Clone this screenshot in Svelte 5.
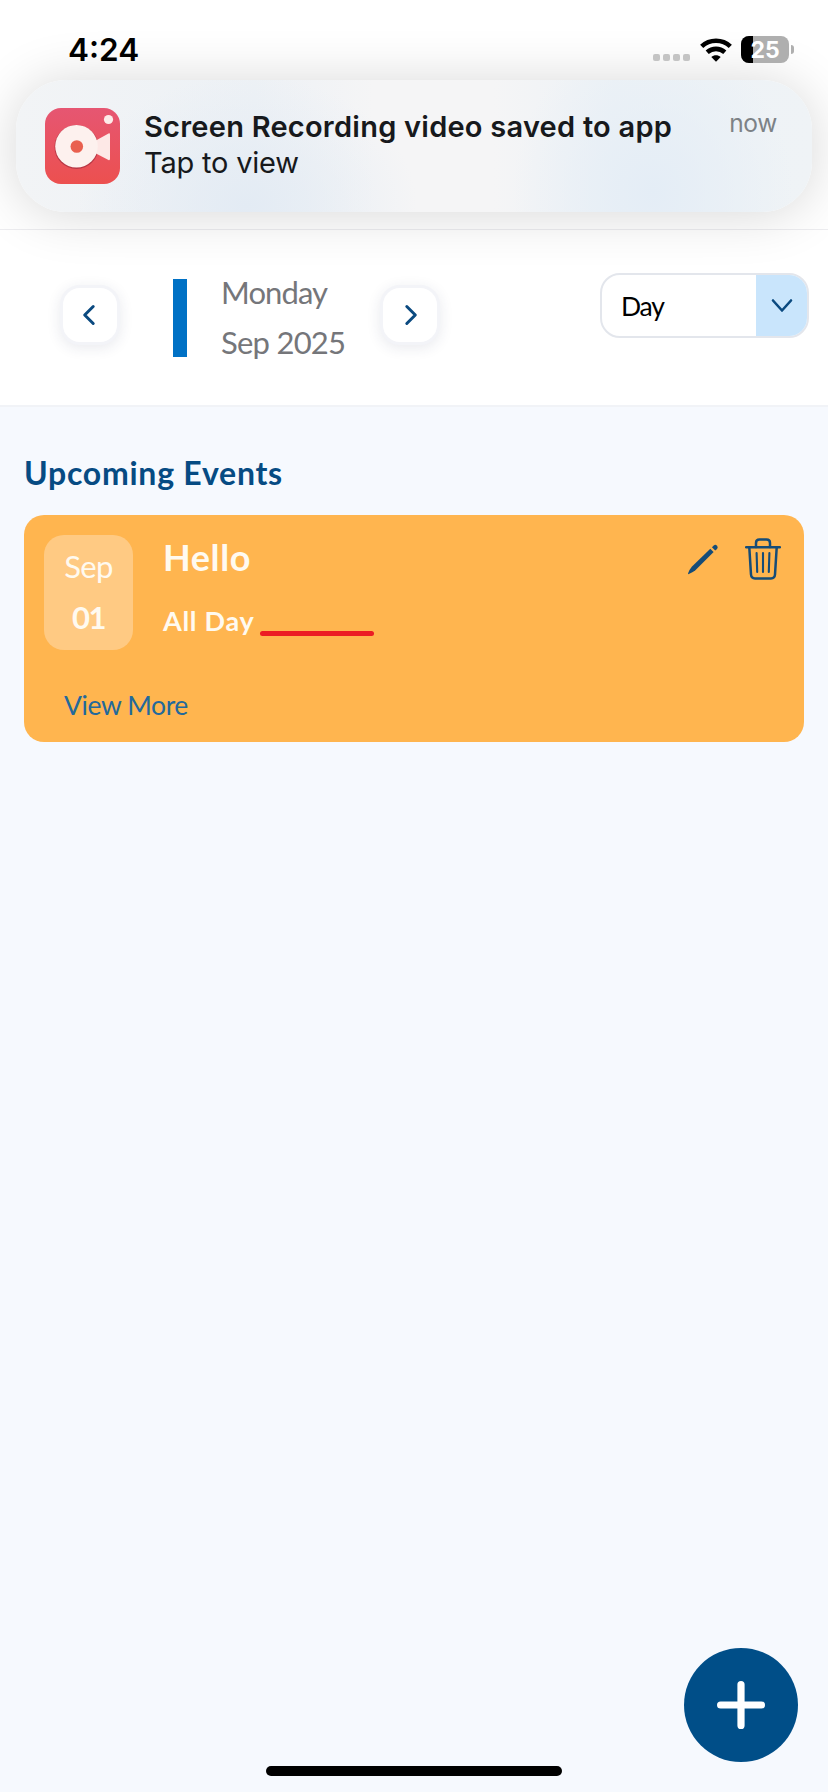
<script lang="ts">
	type CalendarEvent = {
		month: string;
		day: string;
		title: string;
		time: string;
	};

	let view = $state('Day');
	let weekday = $state('Monday');
	let monthLabel = $state('Sep 2025');

	const battery = 25;
	const signalDots = [0, 1, 2, 3];
	const events: CalendarEvent[] = [{ month: 'Sep', day: '01', title: 'Hello', time: 'All Day' }];
</script>

<div class="screen">
	<div class="top">
		<div class="status-bar">
			<span class="clock">4:24</span>
			<div class="status-icons">
				<div class="signal">
					{#each signalDots as dot (dot)}
						<span></span>
					{/each}
				</div>
				<svg class="wifi" width="32" height="24" viewBox="0 0 32 24" aria-hidden="true">
					<g fill="none" stroke="#000" stroke-width="4.6">
						<path d="M1.7 8.4C9.6 .9 22.4 .9 30.3 8.4" />
						<path d="M7.2 14.3C12.3 9.7 19.7 9.7 24.8 14.3" />
					</g>
					<path d="M11.3 18.9C14 16.7 18 16.7 20.7 18.9L16 23.8Z" />
				</svg>
				<div class="battery">
					<div class="battery-fill" style="width: {battery}%"></div>
					<span class="battery-text">{battery}</span>
				</div>
				<span class="battery-nub"></span>
			</div>
		</div>

		<div class="banner">
			<svg class="app-icon" width="75" height="76" viewBox="0 0 75 76" aria-hidden="true">
				<defs>
					<linearGradient id="app-bg" x1="0" y1="0" x2="0" y2="1">
						<stop offset="0" stop-color="#e65672" />
						<stop offset="1" stop-color="#ec504f" />
					</linearGradient>
				</defs>
				<rect width="75" height="76" rx="16" fill="url(#app-bg)" />
				<circle cx="31.5" cy="39" r="22" fill="#b93845" />
				<path d="M50 33L63.5 25.5Q65 24.8 65 26.5V50.5Q65 52.7 63.5 52L50 45Z" fill="#fde8e6" />
				<circle cx="31.5" cy="38.3" r="21.3" fill="#fdf1ee" />
				<circle cx="31.8" cy="38.5" r="6.3" fill="#e9604f" />
				<circle cx="63.5" cy="11.5" r="4.6" fill="#fdebe9" />
			</svg>
			<div class="banner-text">
				<span class="banner-title">Screen Recording video saved to app</span>
				<span class="banner-body">Tap to view</span>
			</div>
			<span class="banner-time">now</span>
		</div>
	</div>

	<div class="date-header">
		<button type="button" class="nav-button" aria-label="Previous day">
			<svg width="16" height="22" viewBox="0 0 16 22">
				<path d="M11.2 2.5L2.7 11L11.2 19.5" />
			</svg>
		</button>
		<div class="accent"></div>
		<div class="date-text">
			<span class="weekday">{weekday}</span>
			<span class="month">{monthLabel}</span>
		</div>
		<button type="button" class="nav-button" aria-label="Next day">
			<svg width="16" height="22" viewBox="0 0 16 22">
				<path d="M4.8 2.5L13.3 11L4.8 19.5" />
			</svg>
		</button>
		<button type="button" class="view-select">
			<span class="view-label">{view}</span>
			<span class="view-arrow">
				<svg width="22" height="16" viewBox="0 0 22 16">
					<path d="M2 2.5L11 12.5L20 2.5" />
				</svg>
			</span>
		</button>
	</div>

	<main>
		<h2>Upcoming Events</h2>
		{#each events as event (event.title)}
			<article class="event-card">
				<div class="event-main">
					<div class="date-chip">
						<span class="chip-month">{event.month}</span>
						<span class="chip-day">{event.day}</span>
					</div>
					<div class="event-info">
						<h3>{event.title}</h3>
						<div class="event-time">
							<span class="time-label">{event.time}</span>
							<span class="underline"></span>
						</div>
					</div>
					<div class="event-actions">
						<button type="button" aria-label="Edit event">
							<svg width="32" height="32" viewBox="0 0 32 32" fill="#154c78">
								<path d="M23.3 5.7L26.6 9L8.4 27.2Q5.2 29.7 1.8 31.1Q.8 31.3 1.1 30.2Q2.5 26.5 5 23.6Z" />
								<path d="M24.9 4.2L26.8 2.4Q28.4 1.2 30 2.7Q31.4 4.3 30.1 5.9L28.2 7.5Z" />
							</svg>
						</button>
						<button type="button" aria-label="Delete event">
							<svg
								width="36"
								height="42"
								viewBox="0 0 36 42"
								fill="none"
								stroke="#154c78"
								stroke-width="2.5"
								stroke-linecap="round"
								stroke-linejoin="round"
							>
								<path d="M1.2 9.2H34.8" />
								<path d="M11 9V5Q11 1.6 14.5 1.6H21.5Q25 1.6 25 5V9" />
								<path d="M4.3 9.5L6 36.5Q6.3 40.4 10 40.4H26Q29.7 40.4 30 36.5L31.7 9.5" />
								<path d="M11.6 15L12.2 34M18 15V34M24.4 15L23.8 34" stroke-width="2.1" />
							</svg>
						</button>
					</div>
				</div>
				<button type="button" class="view-more">View More</button>
			</article>
		{/each}
	</main>

	<button type="button" class="fab" aria-label="Add event">
		<svg width="48" height="48" viewBox="0 0 48 48">
			<path d="M24 3.6V44.4M3.6 24H44.4" />
		</svg>
	</button>
	<div class="home-indicator"></div>
</div>

<style>
	:global(body) {
		margin: 0;
		background: #f6f9fe;
	}

	.screen {
		position: relative;
		width: 828px;
		height: 1792px;
		overflow: hidden;
		background: #f6f9fe;
		font-family: Lato, 'Open Sans', sans-serif;
	}

	button {
		display: flex;
		align-items: center;
		justify-content: center;
		box-sizing: border-box;
		border: none;
		background: transparent;
		padding: 0;
		margin: 0;
		font-family: inherit;
		cursor: pointer;
	}

	svg {
		display: block;
	}

	.top {
		box-sizing: border-box;
		height: 230px;
		background: #fff;
		border-bottom: 1px solid #ededf0;
		font-family: Inter, 'Liberation Sans', sans-serif;
	}

	.status-bar {
		position: relative;
		z-index: 2;
		display: flex;
		align-items: flex-start;
		justify-content: space-between;
		box-sizing: border-box;
		height: 80px;
		padding: 29px 34px 0 68px;
	}

	.clock {
		font-size: 31.5px;
		line-height: 41px;
		font-weight: 600;
		color: #000;
	}

	.status-icons {
		display: flex;
		align-items: center;
		height: 41px;
	}

	.signal {
		display: flex;
		gap: 3px;
		margin: 16px 10px 0 0;
	}

	.signal span {
		width: 7px;
		height: 7px;
		border-radius: 2px;
		background: #c4c4c4;
	}

	.wifi {
		margin-right: 9px;
	}

	.battery {
		position: relative;
		width: 48px;
		height: 27px;
		border-radius: 8px;
		overflow: hidden;
		background: #afafaf;
	}

	.battery-fill {
		height: 100%;
		background: #000;
	}

	.battery-text {
		position: absolute;
		inset: 0;
		font-size: 23px;
		line-height: 28px;
		font-weight: 700;
		text-align: center;
		color: #fff;
	}

	.battery-nub {
		width: 3px;
		height: 9px;
		margin-left: 2px;
		border-radius: 0 4px 4px 0;
		background: #afafaf;
	}

	.banner {
		position: relative;
		z-index: 1;
		display: flex;
		align-items: flex-start;
		box-sizing: border-box;
		height: 132px;
		margin: 0 16px;
		padding: 28px 35px 0 29px;
		border-radius: 50px;
		background:
			radial-gradient(ellipse 170px 130px at 29% 95%, #e3ebf4 0%, rgba(227, 235, 244, 0) 100%),
			radial-gradient(ellipse 140px 160px at 80% 85%, #e4edf6 0%, rgba(228, 237, 246, 0) 100%),
			linear-gradient(90deg, #f2f4f6 0%, #edf1f5 30%, #f5f5f6 45%, #f5f5f6 60%, #edf2f6 75%, #eff3f6 100%);
		box-shadow: 0 2px 54px rgba(0, 0, 0, 0.16);
	}

	.app-icon {
		flex-shrink: 0;
	}

	.banner-text {
		display: flex;
		flex-direction: column;
		flex: 1;
		margin: 1px 0 0 24px;
		font-size: 29px;
		line-height: 36px;
		color: #17191c;
		white-space: nowrap;
	}

	.banner-title {
		font-weight: 600;
		letter-spacing: 0.24px;
	}

	.banner-body {
		letter-spacing: -0.2px;
	}

	.banner-time {
		font-size: 24.5px;
		line-height: 30px;
		letter-spacing: -0.3px;
		color: #7d8286;
	}

	.date-header {
		display: flex;
		align-items: flex-start;
		box-sizing: border-box;
		height: 177px;
		padding: 43px 19px 0 60px;
		background: #fff;
		border-bottom: 2px solid #f1f3f7;
	}

	.nav-button {
		width: 60px;
		height: 60px;
		margin-top: 12px;
		border: 3px solid #f3f4f8;
		border-radius: 20px;
		background: #fff;
		box-shadow: 0 3px 14px rgba(40, 50, 90, 0.1);
	}

	.nav-button path {
		fill: none;
		stroke: #0b4a80;
		stroke-width: 3;
		stroke-linecap: round;
		stroke-linejoin: round;
	}

	.accent {
		width: 14px;
		height: 78px;
		margin: 6px 34px 0 53px;
		background: #0071c5;
	}

	.date-text {
		display: flex;
		flex-direction: column;
		width: 159px;
		margin-top: -6px;
		font-size: 31px;
		line-height: 50px;
		color: #75767a;
		white-space: nowrap;
	}

	.weekday {
		letter-spacing: -0.9px;
	}

	.month {
		letter-spacing: -0.75px;
	}

	.view-select {
		align-items: stretch;
		justify-content: space-between;
		width: 209px;
		height: 65px;
		margin-left: auto;
		border: 2px solid #e3e6ec;
		border-radius: 20px;
		overflow: hidden;
		background: #fff;
	}

	.view-label {
		padding-left: 19px;
		font-size: 26.5px;
		line-height: 62px;
		letter-spacing: -1.2px;
		color: #000;
	}

	.view-arrow {
		display: flex;
		align-items: center;
		justify-content: center;
		width: 51px;
		background: #c9e5fc;
	}

	.view-arrow path {
		fill: none;
		stroke: #0b4a80;
		stroke-width: 2.6;
		stroke-linecap: round;
		stroke-linejoin: round;
	}

	main {
		padding: 41px 24px 0;
	}

	h2 {
		margin: 0 0 17px;
		font-size: 32px;
		line-height: 50px;
		font-weight: 700;
		letter-spacing: 0.75px;
		color: #064b83;
	}

	.event-card {
		box-sizing: border-box;
		height: 227px;
		padding: 20px;
		border-radius: 20px;
		background: #ffb54f;
		color: #fffaf0;
	}

	.event-main {
		display: flex;
		align-items: flex-start;
	}

	.date-chip {
		display: flex;
		flex-direction: column;
		align-items: center;
		box-sizing: border-box;
		width: 89px;
		height: 115px;
		padding-top: 6px;
		border-radius: 20px;
		background: #ffca83;
		font-size: 31px;
		line-height: 51px;
	}

	.chip-month {
		letter-spacing: -0.7px;
	}

	.chip-day {
		font-weight: 700;
		letter-spacing: -1.5px;
	}

	.event-info {
		flex: 1;
		margin-left: 30px;
	}

	h3 {
		margin: 0;
		font-size: 36px;
		line-height: 44px;
		font-weight: 700;
		letter-spacing: 0.6px;
	}

	.event-time {
		display: flex;
		align-items: flex-end;
		margin-top: 22px;
		font-size: 27px;
		line-height: 40px;
		font-weight: 700;
	}

	.time-label {
		width: 97px;
		letter-spacing: 0.7px;
		white-space: nowrap;
	}

	.underline {
		width: 114px;
		height: 5px;
		margin-bottom: 5px;
		border-radius: 3px;
		background: #ec1c24;
	}

	.event-actions {
		display: flex;
		align-items: flex-start;
		gap: 26px;
		padding: 3px 3px 0 0;
	}

	.event-actions button:first-child {
		margin-top: 5px;
	}

	.view-more {
		margin: 35px 0 0 20px;
		font-size: 26.5px;
		line-height: 40px;
		letter-spacing: -0.4px;
		color: #23699b;
	}

	.fab {
		position: absolute;
		right: 30px;
		bottom: 30px;
		width: 114px;
		height: 114px;
		border-radius: 50%;
		background: #004e88;
	}

	.fab path {
		stroke: #fff;
		stroke-width: 7.2;
		stroke-linecap: round;
	}

	.home-indicator {
		position: absolute;
		bottom: 16px;
		left: 266px;
		width: 296px;
		height: 10px;
		border-radius: 5px;
		background: #000;
	}
</style>
